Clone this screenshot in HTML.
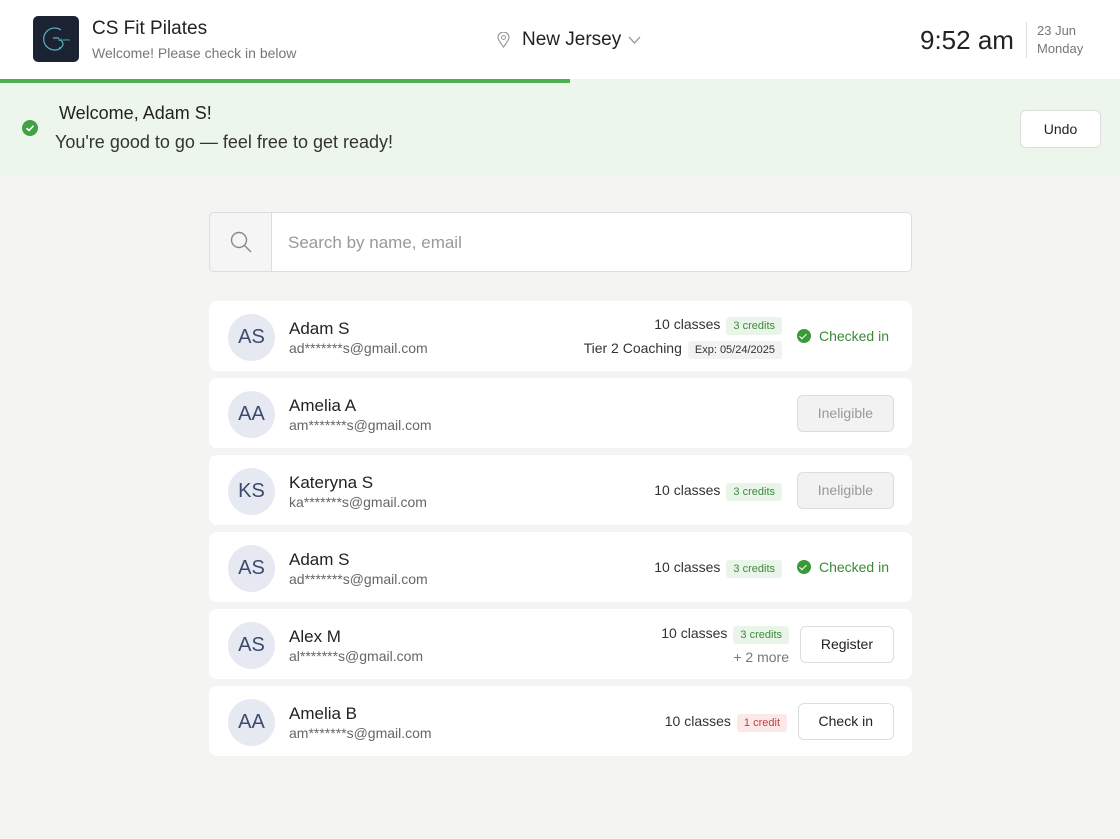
<!DOCTYPE html><html><head><style>
*{box-sizing:border-box;margin:0;padding:0}
body{width:1120px;height:839px;background:#f4f4f2;font-family:"Liberation Sans",sans-serif;color:#222;position:relative;overflow:hidden}
.a{position:absolute}
.card{position:absolute;left:209px;width:703px;height:70px;background:#fff;border-radius:8px}
.av{position:absolute;left:19px;top:13px;width:47px;height:47px;border-radius:50%;background:#e6e9f1;color:#3c4a6e;font-size:20px;text-align:center;line-height:47px}
.nm{position:absolute;left:80px;top:18px;font-size:17px;color:#222}
.em{position:absolute;left:80px;top:39px;font-size:14px;color:#666}
.cls{font-size:14px;color:#333}
.pill{display:inline-block;font-size:11px;padding:3px 7px;border-radius:3px;background:#eaf5ea;color:#3c8a3c;margin-left:6px}
.pr{background:#fbe9e9;color:#c04040}
.btn{position:absolute;right:18px;top:17px;height:37px;border:1px solid #ddd;border-radius:6px;background:#fff;font-size:14px;text-align:center;line-height:35px;padding:0 20px}
.in{background:#f2f2f2;color:#999}
.ck{position:absolute;right:23px;top:27px;color:#3a8a3a;font-size:14px;display:flex;align-items:center;gap:8px}
.dot{width:14px;height:14px;border-radius:50%;background:#3a9a3a;display:inline-block;position:relative}
.dot:after{content:"";position:absolute;left:4px;top:3px;width:3px;height:6px;border:solid #fff;border-width:0 1.5px 1.5px 0;transform:rotate(45deg)}
.r{position:absolute;right:130px;text-align:right}
</style></head><body>
<div class="a" style="left:0;top:0;width:1120px;height:79px;background:#fff"></div>
<div class="a" style="left:33px;top:16px;width:46px;height:46px;border-radius:5px;background:#1b2332"><svg width="46" height="46"><path d="M28 14 A11 11 0 1 0 28 32 M26 22 h-6 M26 32 a4 4 0 0 0 0-8" stroke="#5ab3c0" stroke-width="1.2" fill="none"/><text x="25" y="25" font-size="4" fill="#5ab3c0" font-family="Liberation Sans">Pilates</text></svg></div>
<div class="a" style="left:92px;top:18px;font-size:19px">CS Fit Pilates</div>
<div class="a" style="left:92px;top:45px;font-size:14px;color:#777">Welcome! Please check in below</div>
<svg class="a" style="left:497px;top:32px" width="13" height="16"><path d="M6.5 15 C2 9 1 7 1 5.5 A5.5 5.5 0 0 1 12 5.5 C12 7 11 9 6.5 15Z" fill="none" stroke="#999" stroke-width="1.2"/><circle cx="6.5" cy="5.5" r="2" fill="none" stroke="#999"/></svg>
<div class="a" style="left:522px;top:29px;font-size:19px">New Jersey</div>
<svg class="a" style="left:628px;top:36px" width="13" height="9"><path d="M1 1 L6.5 7 L12 1" fill="none" stroke="#999" stroke-width="1.3"/></svg>
<div class="a" style="left:920px;top:25px;font-size:26px;color:#222">9:52 am</div>
<div class="a" style="left:1026px;top:22px;width:1px;height:36px;background:#ddd"></div>
<div class="a" style="left:1037px;top:22px;font-size:13px;color:#777;line-height:18px">23 Jun<br>Monday</div>
<div class="a" style="left:0;top:79px;width:1120px;height:96px;background:#edf6ed"></div>
<div class="a" style="left:0;top:79px;width:570px;height:4px;background:#4caf50"></div>
<div class="a" style="left:22px;top:120px;width:16px;height:16px;border-radius:50%;background:#43a047"><svg width="16" height="16"><path d="M4.5 8.2 L7 10.5 L11.5 5.8" stroke="#fff" stroke-width="1.6" fill="none"/></svg></div>
<div class="a" style="left:59px;top:103px;font-size:18px">Welcome, Adam S!</div>
<div class="a" style="left:55px;top:132px;font-size:18px;color:#333">You're good to go — feel free to get ready!</div>
<div class="a" style="left:1020px;top:110px;width:81px;height:38px;background:#fff;border:1px solid #ddd;border-radius:6px;text-align:center;line-height:36px;font-size:14px">Undo</div>
<div class="a" style="left:209px;top:212px;width:703px;height:60px;background:#fff;border:1px solid #ddd;border-radius:5px"></div>
<div class="a" style="left:209px;top:212px;width:63px;height:60px;background:#f5f5f5;border:1px solid #ddd;border-radius:5px 0 0 5px"></div>
<svg class="a" style="left:230px;top:231px" width="22" height="22"><circle cx="9" cy="9" r="7.5" fill="none" stroke="#888" stroke-width="1.4"/><path d="M14.5 14.5 L21 21" stroke="#888" stroke-width="1.4"/></svg>
<div class="a" style="left:288px;top:233px;font-size:17px;color:#999">Search by name, email</div>

<div class="card" style="top:301px"><div class="av">AS</div><div class="nm">Adam S</div><div class="em">ad*******s@gmail.com</div>
<div class="r" style="top:15px"><span class="cls">10 classes</span><span class="pill">3 credits</span></div>
<div class="r" style="top:39px"><span class="cls">Tier 2 Coaching</span><span class="pill" style="background:#f2f2f2;color:#333">Exp: 05/24/2025</span></div>
<div class="ck"><span class="dot"></span>Checked in</div></div>

<div class="card" style="top:378px"><div class="av">AA</div><div class="nm">Amelia A</div><div class="em">am*******s@gmail.com</div>
<div class="btn in">Ineligible</div></div>

<div class="card" style="top:455px"><div class="av">KS</div><div class="nm">Kateryna S</div><div class="em">ka*******s@gmail.com</div>
<div class="r" style="top:27px"><span class="cls">10 classes</span><span class="pill">3 credits</span></div>
<div class="btn in">Ineligible</div></div>

<div class="card" style="top:532px"><div class="av">AS</div><div class="nm">Adam S</div><div class="em">ad*******s@gmail.com</div>
<div class="r" style="top:27px;right:130px"><span class="cls">10 classes</span><span class="pill">3 credits</span></div>
<div class="ck"><span class="dot"></span>Checked in</div></div>

<div class="card" style="top:609px"><div class="av">AS</div><div class="nm">Alex M</div><div class="em">al*******s@gmail.com</div>
<div class="r" style="top:16px;right:123px"><span class="cls">10 classes</span><span class="pill">3 credits</span></div>
<div class="r" style="top:40px;right:123px;font-size:14px;color:#777">+ 2 more</div>
<div class="btn">Register</div></div>

<div class="card" style="top:686px"><div class="av">AA</div><div class="nm">Amelia B</div><div class="em">am*******s@gmail.com</div>
<div class="r" style="top:27px;right:125px"><span class="cls">10 classes</span><span class="pill pr">1 credit</span></div>
<div class="btn">Check in</div></div>
</body></html>
